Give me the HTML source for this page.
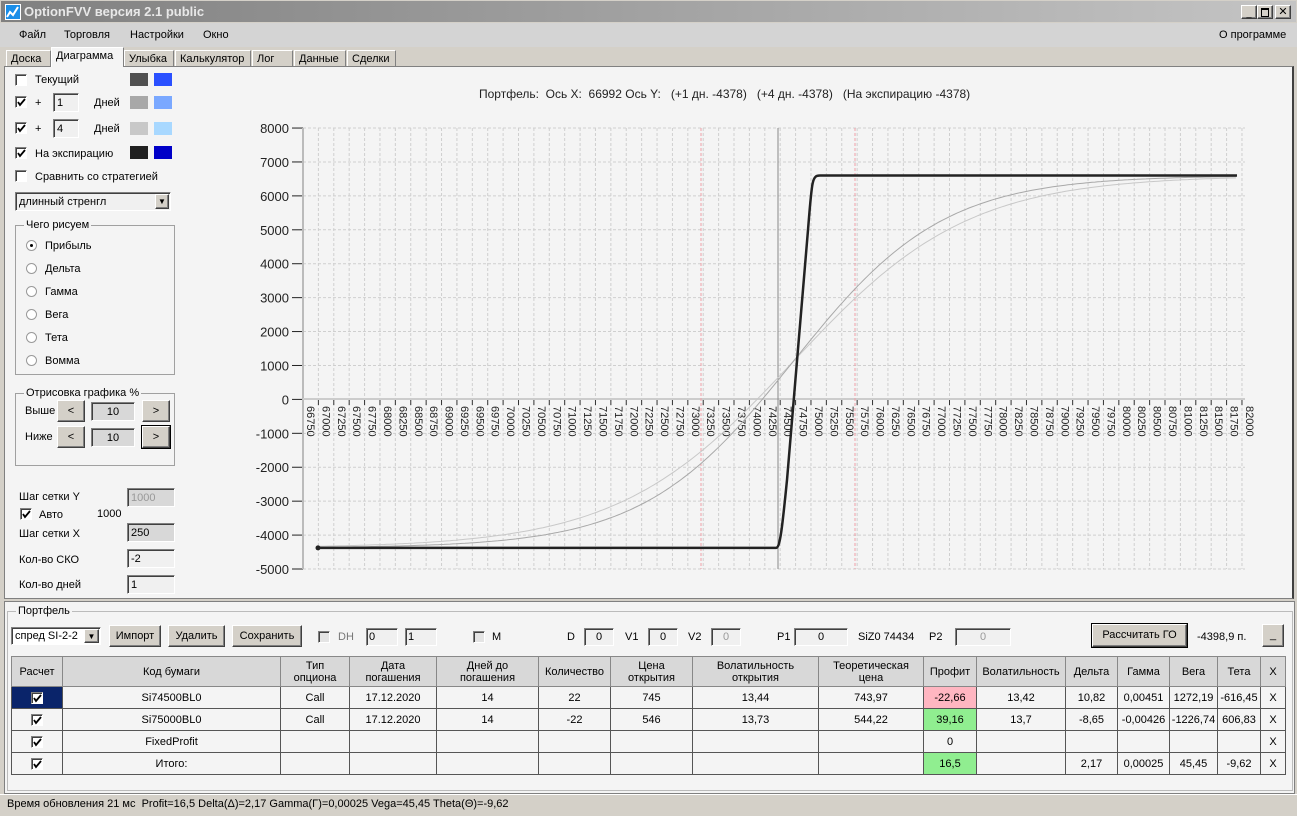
<!DOCTYPE html>
<html><head><meta charset="utf-8">
<style>
*{margin:0;padding:0;box-sizing:border-box}
body{width:1297px;height:816px;position:relative;overflow:hidden;background:#d4d0c8;font-family:"Liberation Sans","DejaVu Sans",sans-serif;font-size:11px;color:#000}
.a{position:absolute;white-space:nowrap}
.title{left:0;top:0;width:1297px;height:23px;background:linear-gradient(90deg,#808080,#c4c4c4);border:1px solid #d4d0c8}
.menu{left:0;top:23px;width:1297px;height:24px;background:#d4d4d4}
.tab{position:absolute;top:50px;height:17px;border:1px solid #fff;border-right-color:#808080;border-bottom:none;background:#d4d0c8;padding:2px 4px;font-size:11px}
.panel{left:4px;top:66px;width:1290px;height:533px;background:#f4f4f4;border:1px solid #808080;border-right:2px solid #404040}
.cb{position:absolute;width:12px;height:12px;border:1px solid #808080;border-right-color:#fff;border-bottom-color:#fff;background:#fff;box-shadow:inset 1px 1px #404040}
.cb.k{background:#fff url() no-repeat}
.cb.d{background:#e4e4e4}
.cb svg{position:absolute;left:1px;top:1px}
.sw{position:absolute;width:18px;height:13px}
.inp{position:absolute;height:19px;border:1px solid #808080;border-right-color:#fff;border-bottom-color:#fff;box-shadow:inset 1px 1px #404040;background:#f0f0f0;padding:3px 3px 0;font-size:11px;line-height:13px}
.btn{position:absolute;background:#d4d0c8;border:1px solid #fff;border-right-color:#404040;border-bottom-color:#404040;box-shadow:inset -1px -1px #808080;text-align:center;font-size:11px}
.grp{position:absolute;border:1px solid #a0a0a0}
.grp>span{position:absolute;top:-7px;left:8px;background:#f4f4f4;padding:0 2px}
.rb{position:absolute;width:11px;height:11px;border-radius:50%;border:1px solid #999;background:#fff}
.rb.k::after{content:"";position:absolute;left:3px;top:3px;width:3px;height:3px;border-radius:50%;background:#000}
table{position:absolute;left:11px;top:656px;border-collapse:collapse;font-size:11px}
td{border:1px solid #555;text-align:center;height:22px;padding:0;background:#f4f4f4}
tr.h td{background:#d8d8d8;height:30px;line-height:12px;border-color:#888}
td .cb{position:relative;display:inline-block;vertical-align:middle}
</style></head><body>
<div class="a title"></div>
<div class="a" style="left:5px;top:4px;width:16px;height:16px;background:#1a8ee8;border:1px solid #fff"></div>
<svg class="a" style="left:6px;top:5px" width="14" height="14"><polyline points="1,12 4,7 7,10 12,2" fill="none" stroke="#fff" stroke-width="2"/></svg>
<div class="a" style="left:24px;top:4px;font-size:13px;font-weight:bold;color:#e8e8e8">OptionFVV версия 2.1 public</div>
<div class="btn" style="left:1241px;top:5px;width:16px;height:14px;font-size:9px;line-height:14px">_</div>
<div class="btn" style="left:1257px;top:5px;width:16px;height:14px"><div style="margin:2px 3px;height:9px;border:1px solid #000;border-top-width:2px"></div></div>
<div class="btn" style="left:1275px;top:5px;width:16px;height:14px;font-size:11px;line-height:13px;font-weight:bold">✕</div>
<div class="a menu"></div>
<div class="a" style="left:19px;top:29px">Файл</div>
<div class="a" style="left:64px;top:29px">Торговля</div>
<div class="a" style="left:130px;top:29px">Настройки</div>
<div class="a" style="left:203px;top:29px">Окно</div>
<div class="a" style="left:1219px;top:29px">О программе</div>
<div class="tab" style="left:6px;width:45px">Доска</div>
<div class="tab" style="left:51px;top:47px;height:20px;width:73px;background:#f4f4f4;z-index:2">Диаграмма</div>
<div class="tab" style="left:124px;width:50px">Улыбка</div>
<div class="tab" style="left:175px;width:76px">Калькулятор</div>
<div class="tab" style="left:252px;width:41px">Лог</div>
<div class="tab" style="left:294px;width:52px">Данные</div>
<div class="tab" style="left:347px;width:49px">Сделки</div>
<div class="a panel"></div>

<div class="cb" style="left:15px;top:74px"></div><div class="a" style="left:35px;top:74px">Текущий</div>
<div class="sw" style="left:130px;top:73px;background:#505050"></div><div class="sw" style="left:154px;top:73px;background:#2a50ff"></div>
<div class="cb k" style="left:15px;top:96px"></div><div class="a" style="left:35px;top:97px">+</div>
<div class="inp" style="left:53px;top:93px;width:26px">1</div><div class="a" style="left:94px;top:97px">Дней</div>
<div class="sw" style="left:130px;top:96px;background:#a8a8a8"></div><div class="sw" style="left:154px;top:96px;background:#7aa8ff"></div>
<div class="cb k" style="left:15px;top:122px"></div><div class="a" style="left:35px;top:123px">+</div>
<div class="inp" style="left:53px;top:119px;width:26px">4</div><div class="a" style="left:94px;top:123px">Дней</div>
<div class="sw" style="left:130px;top:122px;background:#c8c8c8"></div><div class="sw" style="left:154px;top:122px;background:#a8d8ff"></div>
<div class="cb k" style="left:15px;top:147px"></div><div class="a" style="left:35px;top:148px">На экспирацию</div>
<div class="sw" style="left:130px;top:146px;background:#202020"></div><div class="sw" style="left:154px;top:146px;background:#0000c8"></div>
<div class="cb" style="left:15px;top:170px"></div><div class="a" style="left:35px;top:171px">Сравнить со стратегией</div>
<div class="inp" style="left:15px;top:192px;width:156px;height:19px">длинный стренгл</div>
<div class="btn" style="left:155px;top:194px;width:14px;height:15px;font-size:8px;line-height:14px">▼</div>

<div class="grp" style="left:15px;top:225px;width:160px;height:150px"><span>Чего рисуем</span></div>
<div class="rb k" style="left:26px;top:240px"></div><div class="a" style="left:45px;top:240px">Прибыль</div>
<div class="rb" style="left:26px;top:263px"></div><div class="a" style="left:45px;top:263px">Дельта</div>
<div class="rb" style="left:26px;top:286px"></div><div class="a" style="left:45px;top:286px">Гамма</div>
<div class="rb" style="left:26px;top:309px"></div><div class="a" style="left:45px;top:309px">Вега</div>
<div class="rb" style="left:26px;top:332px"></div><div class="a" style="left:45px;top:332px">Тета</div>
<div class="rb" style="left:26px;top:355px"></div><div class="a" style="left:45px;top:355px">Вомма</div>
<div class="grp" style="left:15px;top:393px;width:160px;height:73px"><span>Отрисовка графика %</span></div>
<div class="a" style="left:25px;top:405px">Выше</div>
<div class="btn" style="left:57px;top:400px;width:28px;height:22px;line-height:20px">&lt;</div>
<div class="inp" style="left:91px;top:402px;width:44px;background:#d8d8d8;text-align:center">10</div>
<div class="btn" style="left:142px;top:400px;width:28px;height:22px;line-height:20px">&gt;</div>
<div class="a" style="left:25px;top:431px">Ниже</div>
<div class="btn" style="left:57px;top:426px;width:28px;height:22px;line-height:20px">&lt;</div>
<div class="inp" style="left:91px;top:428px;width:44px;background:#d8d8d8;text-align:center">10</div>
<div class="btn" style="left:142px;top:426px;width:28px;height:22px;line-height:20px;outline:1px solid #000">&gt;</div>

<div class="a" style="left:19px;top:491px">Шаг сетки Y</div>
<div class="inp" style="left:127px;top:488px;width:48px;background:#d8d8d8;color:#999">1000</div>
<div class="cb k" style="left:20px;top:508px"></div><div class="a" style="left:39px;top:509px">Авто</div><div class="a" style="left:97px;top:508px">1000</div>
<div class="a" style="left:19px;top:528px">Шаг сетки X</div>
<div class="inp" style="left:127px;top:523px;width:48px;background:#d8d8d8">250</div>
<div class="a" style="left:19px;top:554px">Кол-во СКО</div>
<div class="inp" style="left:127px;top:549px;width:48px">-2</div>
<div class="a" style="left:19px;top:579px">Кол-во дней</div>
<div class="inp" style="left:127px;top:575px;width:48px">1</div>

<div class="a" style="left:479px;top:87px;font-size:12px;color:#222">Портфель:&nbsp; Ось X:&nbsp; 66992 Ось Y:&nbsp;&nbsp; (+1 дн. -4378)&nbsp;&nbsp; (+4 дн. -4378)&nbsp;&nbsp; (На экспирацию -4378)</div>
<svg id="ch" class="a" style="left:0;top:0" width="1297" height="600"></svg>

<div class="a" style="left:4px;top:601px;width:1291px;height:193px;background:#f4f4f4;border:1px solid #808080"></div>
<div class="grp" style="left:7px;top:611px;width:1286px;height:180px;border-color:#bbb"><span>Портфель</span></div>
<div class="inp" style="left:11px;top:627px;width:90px;height:18px;background:#fff;padding-top:2px">спред SI-2-2</div>
<div class="btn" style="left:84px;top:629px;width:15px;height:14px;font-size:8px;line-height:13px">▼</div>
<div class="btn" style="left:109px;top:625px;width:52px;height:22px;line-height:20px">Импорт</div>
<div class="btn" style="left:168px;top:625px;width:57px;height:22px;line-height:20px">Удалить</div>
<div class="btn" style="left:232px;top:625px;width:70px;height:22px;line-height:20px">Сохранить</div>
<div class="cb d" style="left:318px;top:631px"></div><div class="a" style="left:338px;top:631px;color:#777">DH</div>
<div class="inp" style="left:366px;top:628px;width:32px;height:18px;padding:2px 2px 0">0</div>
<div class="inp" style="left:405px;top:628px;width:32px;height:18px;padding:2px 2px 0">1</div>
<div class="cb d" style="left:473px;top:631px"></div><div class="a" style="left:492px;top:631px">M</div>
<div class="a" style="left:567px;top:631px">D</div><div class="inp" style="left:584px;top:628px;width:30px;height:18px;text-align:center;padding-top:2px">0</div>
<div class="a" style="left:625px;top:631px">V1</div><div class="inp" style="left:648px;top:628px;width:30px;height:18px;text-align:center;padding-top:2px">0</div>
<div class="a" style="left:688px;top:631px">V2</div><div class="inp" style="left:711px;top:628px;width:30px;height:18px;text-align:center;color:#999;padding-top:2px">0</div>
<div class="a" style="left:777px;top:631px">P1</div><div class="inp" style="left:794px;top:628px;width:54px;height:18px;text-align:center;padding-top:2px">0</div>
<div class="a" style="left:858px;top:631px">SiZ0 74434</div>
<div class="a" style="left:929px;top:631px">P2</div><div class="inp" style="left:955px;top:628px;width:56px;height:18px;text-align:center;color:#999;padding-top:2px">0</div>
<div class="btn" style="left:1092px;top:624px;width:95px;height:23px;line-height:20px;outline:1px solid #000">Рассчитать ГО</div>
<div class="a" style="left:1197px;top:631px">-4398,9 п.</div>
<div class="btn" style="left:1262px;top:624px;width:22px;height:23px;line-height:20px">_</div>

<table>
<colgroup><col width="51"><col width="218"><col width="69"><col width="87"><col width="102"><col width="72"><col width="82"><col width="126"><col width="105"><col width="53"><col width="89"><col width="52"><col width="52"><col width="48"><col width="43"><col width="25"></colgroup>
<tr class="h"><td>Расчет</td><td>Код бумаги</td><td>Тип<br>опциона</td><td>Дата<br>погашения</td><td>Дней до<br>погашения</td><td>Количество</td><td>Цена<br>открытия</td><td>Волатильность<br>открытия</td><td>Теоретическая<br>цена</td><td>Профит</td><td>Волатильность</td><td>Дельта</td><td>Гамма</td><td>Вега</td><td>Тета</td><td>X</td></tr>
<tr><td style="background:#0a246a"><span class="cb k"></span></td><td>Si74500BL0</td><td>Call</td><td>17.12.2020</td><td>14</td><td>22</td><td>745</td><td>13,44</td><td>743,97</td><td style="background:#ffb6c1">-22,66</td><td>13,42</td><td>10,82</td><td>0,00451</td><td>1272,19</td><td>-616,45</td><td>X</td></tr>
<tr><td><span class="cb k"></span></td><td>Si75000BL0</td><td>Call</td><td>17.12.2020</td><td>14</td><td>-22</td><td>546</td><td>13,73</td><td>544,22</td><td style="background:#90ee90">39,16</td><td>13,7</td><td>-8,65</td><td>-0,00426</td><td>-1226,74</td><td>606,83</td><td>X</td></tr>
<tr><td><span class="cb k"></span></td><td>FixedProfit</td><td></td><td></td><td></td><td></td><td></td><td></td><td></td><td>0</td><td></td><td></td><td></td><td></td><td></td><td>X</td></tr>
<tr><td><span class="cb k"></span></td><td>Итого:</td><td></td><td></td><td></td><td></td><td></td><td></td><td></td><td style="background:#90ee90">16,5</td><td></td><td>2,17</td><td>0,00025</td><td>45,45</td><td>-9,62</td><td>X</td></tr>
</table>
<div class="a" style="left:0;top:794px;width:1297px;height:22px;background:#d4d0c8;border-top:1px solid #fff"></div>
<div class="a" style="left:7px;top:798px">Время обновления 21 мс&nbsp; Profit=16,5 Delta(Δ)=2,17 Gamma(Γ)=0,00025 Vega=45,45 Theta(Θ)=-9,62</div>

<script>
document.querySelectorAll('.cb.k').forEach(function(e){e.innerHTML='<svg width="9" height="9"><polyline points="1,4 3,7 8,1" fill="none" stroke="#000" stroke-width="1.8"/></svg>';});
var s='',X0=303,DX=15.393,Y0=399.4,DY=33.92;
function y(v){return Y0-v/1000*DY}
for(var i=0;i<=61;i++){var x=X0+i*DX;s+='<line x1="'+x+'" y1="128" x2="'+x+'" y2="569" stroke="#cfcfcf" stroke-dasharray="3,2"/>';
s+='<line x1="'+x+'" y1="399" x2="'+x+'" y2="405" stroke="#333"/>';
s+='<text transform="translate('+(x+4)+',406) rotate(90)" font-size="11" font-family="Liberation Sans" fill="#222">'+(66750+i*250)+'</text>';}
for(var v=-5000;v<=8000;v+=1000){var yy=y(v);s+='<line x1="303" y1="'+yy+'" x2="1245" y2="'+yy+'" stroke="#cfcfcf" stroke-dasharray="3,2"/>';
s+='<line x1="292" y1="'+yy+'" x2="303" y2="'+yy+'" stroke="#222"/><text x="289" y="'+(yy+5)+'" font-size="13" text-anchor="end" font-family="Liberation Sans" fill="#222">'+v+'</text>';}
s+='<line x1="303" y1="128" x2="303" y2="569" stroke="#bbb" stroke-width="2"/><line x1="303" y1="399" x2="1245" y2="399" stroke="#ccc" stroke-width="2"/>';
s+='<line x1="701" y1="128" x2="701" y2="569" stroke="#f0a0a8" stroke-dasharray="3,2"/><line x1="855" y1="128" x2="855" y2="569" stroke="#f0a0a8" stroke-dasharray="3,2"/>';
s+='<line x1="778" y1="128" x2="778" y2="569" stroke="#888"/>';
function sig(sc,col){var p='';for(var x=318;x<=1237;x+=3){var v=1111+5489*Math.tanh((x-793)/sc);p+=x+','+y(v).toFixed(1)+' ';}return '<polyline points="'+p+'" fill="none" stroke="'+col+'" stroke-width="1"/>';}
s+=sig(175,'#c8c8c8')+sig(150,'#a8a8a8');
var lo=y(-4378),hi=y(6600);
s+='<path d="M318 '+lo+' L776 '+lo+' C780 '+lo+' 782 530 787 480 L808 230 C812 180 812 '+hi+' 820 '+hi+' L1237 '+hi+'" fill="none" stroke="#222" stroke-width="2.5"/>';
s+='<circle cx="318" cy="'+lo+'" r="2.5" fill="#222"/>';
document.getElementById('ch').innerHTML=s;
</script>
</body></html>
